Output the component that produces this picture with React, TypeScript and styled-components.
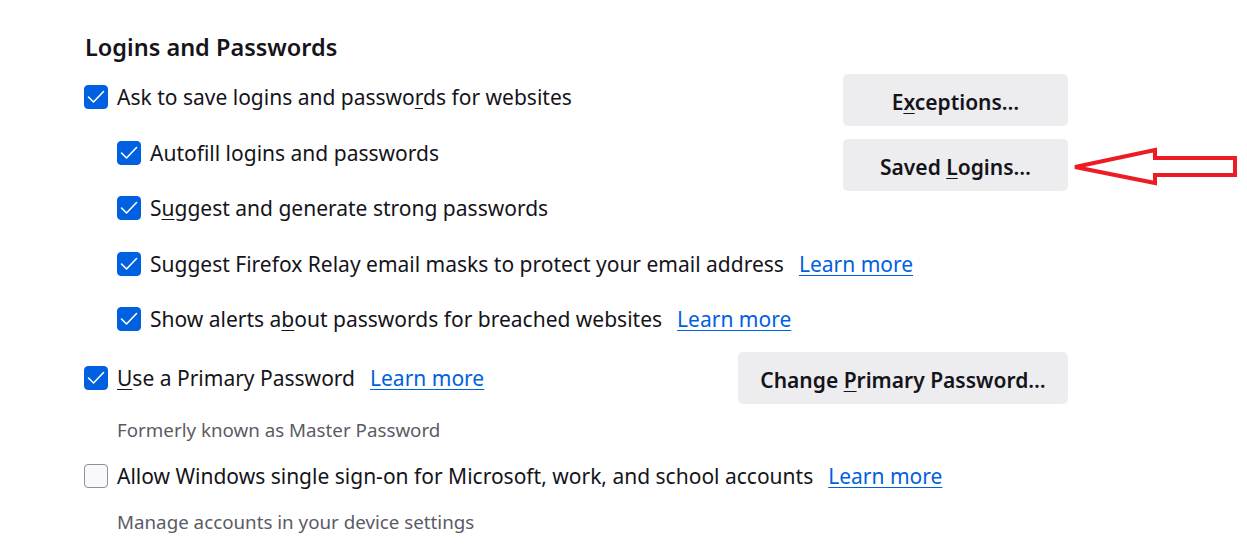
import React from 'react';
import styled, { createGlobalStyle } from 'styled-components';

const GlobalStyle = createGlobalStyle`
  html, body {
    margin: 0;
    padding: 0;
    background: #ffffff;
  }
  body {
    font-family: "Noto Sans", "Open Sans", sans-serif;
    color: #15141a;
  }
`;

const Page = styled.div`
  position: relative;
  width: 1247px;
  height: 553px;
  overflow: hidden;
  padding: 31px 0 0 84px;
  box-sizing: border-box;
`;

const Section = styled.div`
  width: 984px;
`;

const Heading = styled.h2`
  margin: 0 0 0 1px;
  font-size: 23.5px;
  font-weight: 600;
  line-height: 32px;
`;

const TopGroup = styled.div`
  display: grid;
  grid-template-columns: minmax(0, 1fr) 225px;
  align-items: start;
  margin-top: 11px;
`;

const Options = styled.div`
  display: flex;
  flex-direction: column;
  gap: 23.5px;
  padding-top: 7px;
  min-width: 0;
`;

const Buttons = styled.div`
  display: flex;
  flex-direction: column;
  gap: 13px;
`;

const Row = styled.div<{ $indent?: boolean }>`
  display: flex;
  align-items: center;
  height: 32px;
  padding-left: ${p => (p.$indent ? '33px' : '0')};
`;

const Label = styled.span`
  font-size: 21px;
  line-height: 32px;
  margin-left: 9px;
  white-space: nowrap;
`;

const Link = styled.a`
  font-size: 21px;
  line-height: 32px;
  color: #0061e0;
  text-decoration: underline;
  text-decoration-thickness: 1px;
  text-underline-offset: 3px;
  margin-left: 15px;
  cursor: pointer;
  white-space: nowrap;
`;

const Box = styled.span<{ $checked: boolean }>`
  display: inline-flex;
  align-items: center;
  justify-content: center;
  flex: none;
  width: 24px;
  height: 24px;
  box-sizing: border-box;
  border-radius: 4px;
  background: ${p => (p.$checked ? '#0061e0' : '#f9f9fb')};
  border: 1px solid ${p => (p.$checked ? '#0061e0' : '#8f8f9d')};
`;

const Button = styled.button<{ $width: number }>`
  width: ${p => p.$width}px;
  height: 52px;
  border: none;
  border-radius: 5px;
  background: #ededf0;
  font-family: "Noto Sans", "Open Sans", sans-serif;
  font-size: 21px;
  line-height: 28px;
  font-weight: 600;
  color: #15141a;
  padding: 3px 0 0;
  cursor: pointer;
`;

const Key = styled.span`
  text-decoration: underline;
  text-decoration-thickness: 1px;
  text-underline-offset: 3px;
`;

const PrimaryRow = styled.div`
  display: flex;
  justify-content: space-between;
  align-items: center;
  margin-top: 17px;
`;

const Description = styled.div<{ $gap: number }>`
  margin-top: ${p => p.$gap}px;
  font-size: 18.75px;
  line-height: 24px;
  color: #5b5b66;
  padding-left: 33px;
`;

const WindowsRow = styled(Row)`
  margin-top: 18px;
`;

const Arrow = styled.svg`
  position: absolute;
  left: 1071px;
  top: 146px;
`;

const Check = ({ checked }: { checked: boolean }) => (
  <Box $checked={checked}>
    {checked && (
      <svg width="20" height="20" viewBox="0 0 20 20">
        <polyline
          points="2.5,10 7.5,15 17.5,4.5"
          fill="none"
          stroke="#ffffff"
          strokeWidth="1.6"
          strokeLinecap="round"
          strokeLinejoin="round"
        />
      </svg>
    )}
  </Box>
);

export default function App() {
  return (
    <>
      <GlobalStyle />
      <Page>
        <Section>
          <Heading>Logins and Passwords</Heading>
          <TopGroup>
            <Options>
              <Row>
                <Check checked />
                <Label>
                  Ask to save logins and passwo<Key>r</Key>ds for websites
                </Label>
              </Row>
              <Row $indent>
                <Check checked />
                <Label>
                  Autof<Key>i</Key>ll logins and passwords
                </Label>
              </Row>
              <Row $indent>
                <Check checked />
                <Label>
                  S<Key>u</Key>ggest and generate strong passwords
                </Label>
              </Row>
              <Row $indent>
                <Check checked />
                <Label>Suggest Firefox Relay email masks to protect your email address</Label>
                <Link>Learn more</Link>
              </Row>
              <Row $indent>
                <Check checked />
                <Label>
                  Show alerts a<Key>b</Key>out passwords for breached websites
                </Label>
                <Link>Learn more</Link>
              </Row>
            </Options>
            <Buttons>
              <Button $width={225}>
                E<Key>x</Key>ceptions…
              </Button>
              <Button $width={225}>
                Saved <Key>L</Key>ogins…
              </Button>
            </Buttons>
          </TopGroup>

          <PrimaryRow>
            <Row>
              <Check checked />
              <Label>
                <Key>U</Key>se a Primary Password
              </Label>
              <Link>Learn more</Link>
            </Row>
            <Button $width={330}>
              Change <Key>P</Key>rimary Password…
            </Button>
          </PrimaryRow>
          <Description $gap={14}>Formerly known as Master Password</Description>

          <WindowsRow>
            <Check checked={false} />
            <Label>Allow Windows single sign-on for Microsoft, work, and school accounts</Label>
            <Link>Learn more</Link>
          </WindowsRow>
          <Description $gap={18}>Manage accounts in your device settings</Description>
        </Section>

        <Arrow width="170" height="44" viewBox="0 0 170 44">
          <polygon
            points="4,21 84,4 84,12 164,12 164,29 84,29 84,37"
            fill="none"
            stroke="#ed1c24"
            strokeWidth="4"
            strokeLinejoin="miter"
          />
        </Arrow>
      </Page>
    </>
  );
}
